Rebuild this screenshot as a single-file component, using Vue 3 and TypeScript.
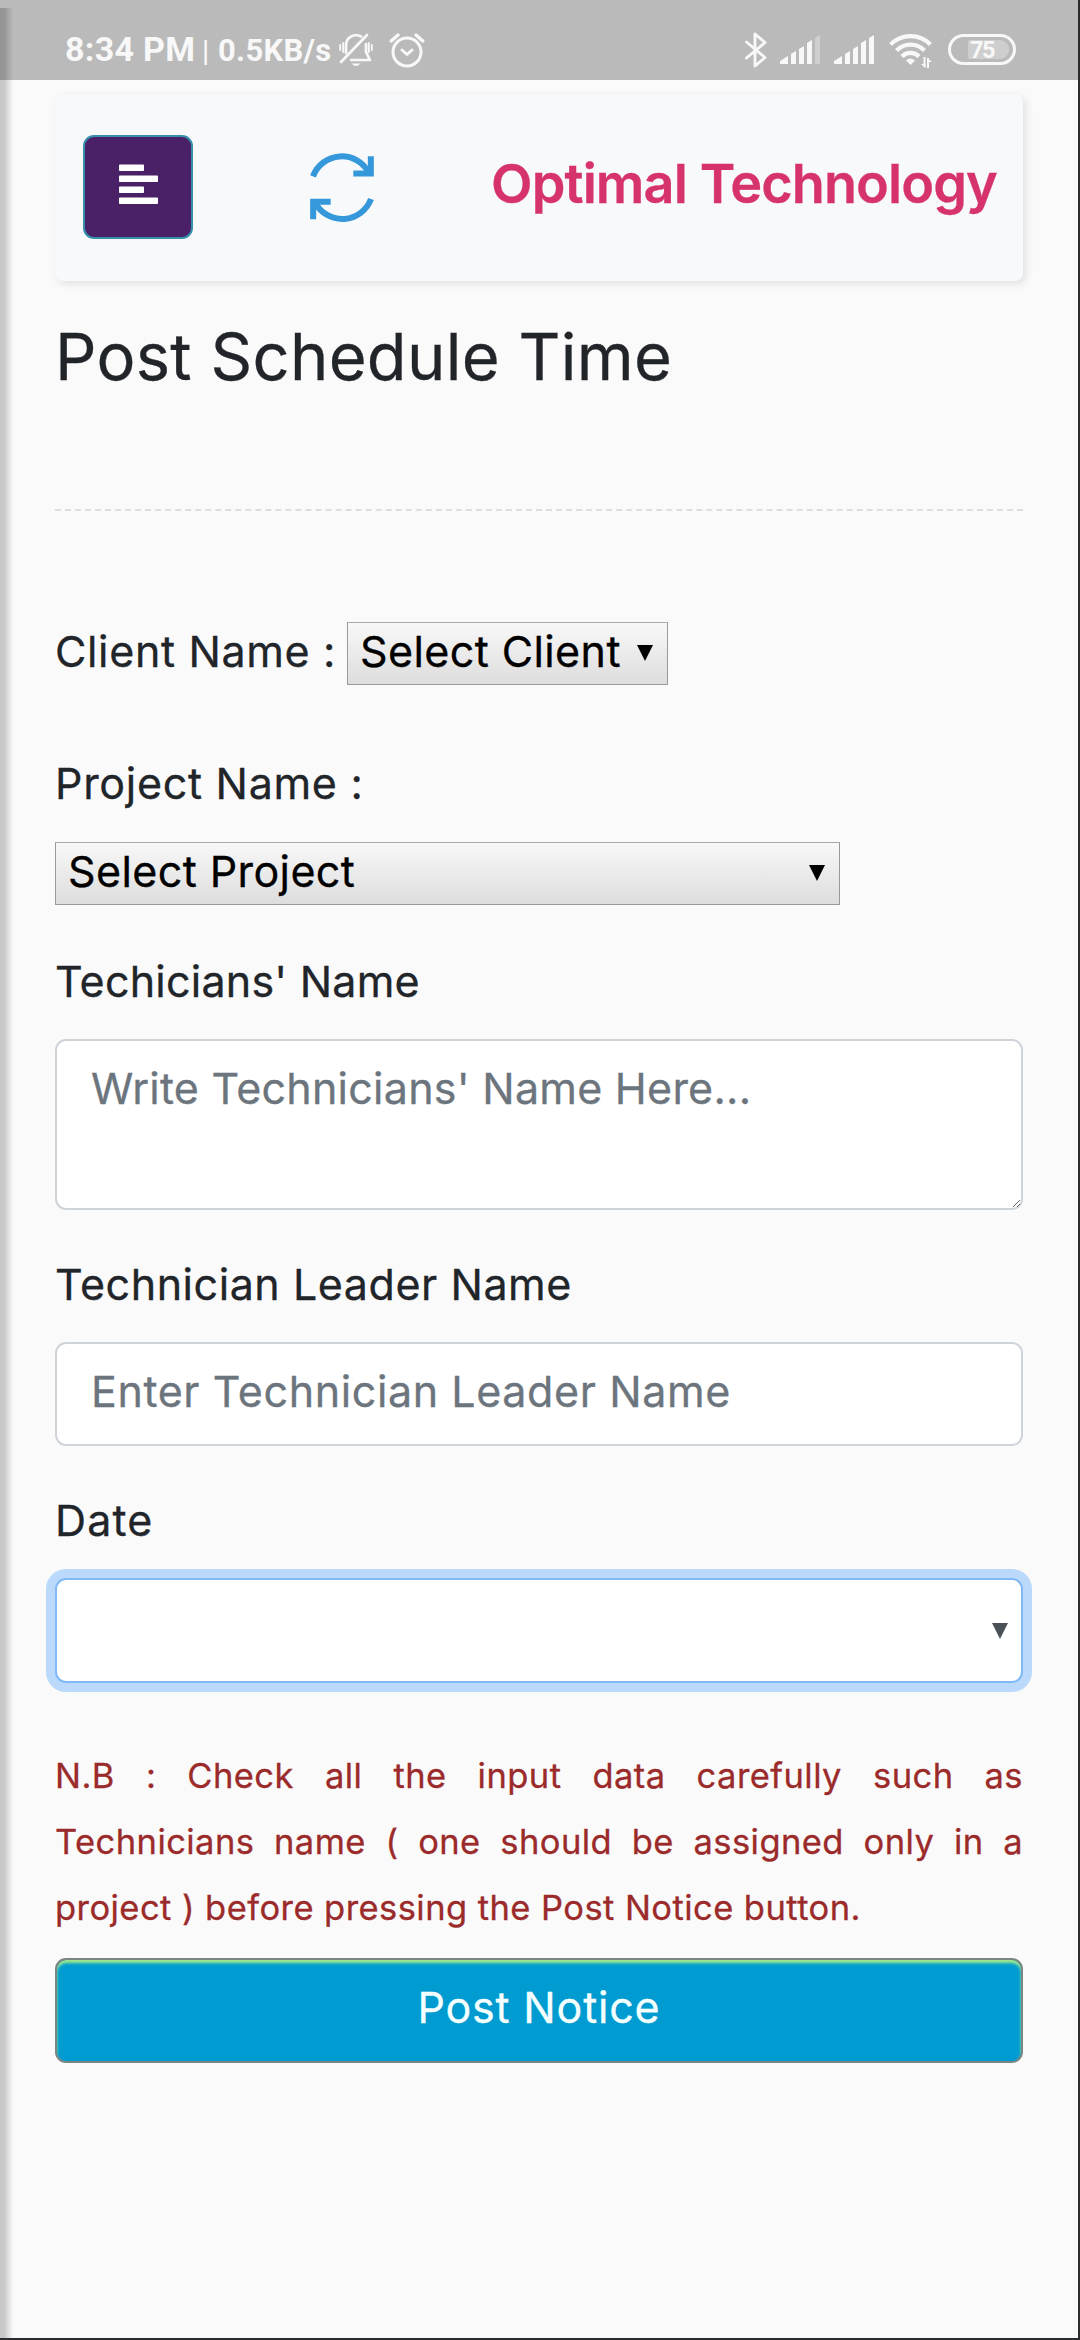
<script setup lang="ts">
import { ref } from 'vue'

const client = ref('')
const project = ref('')
const technicians = ref('')
const leader = ref('')
const date = ref('')
const bars = [8, 13, 18, 24, 29]
</script>

<template>
  <div class="screen">
    <header class="status">
      <div class="status-text">
        <span class="time">8:34 PM</span>
        <span class="sep">|</span>
        <span class="speed">0.5KB/s</span>
      </div>
      <svg class="bell" width="34" height="34" viewBox="0 0 34 34" fill="none" stroke="#f8f8f8" stroke-width="2.7" stroke-linecap="round" stroke-linejoin="round">
        <path d="M7 20V12a10 10 0 0 1 15-8.5" />
        <path d="M27 11v8l4 8H12" />
        <path d="M2 29 28 2" />
        <path d="M1.2 12v5M4.2 10v9M29.8 10v9M32.8 12v5" stroke-width="1.9" />
        <path d="M12.500 30.500h9q-4.500 5-9 0z" fill="#f8f8f8" stroke="none" />
      </svg>
      <svg class="alarm" width="36" height="36" viewBox="0 0 36 36" fill="none" stroke="#f8f8f8" stroke-linecap="round" stroke-linejoin="round">
        <circle cx="18" cy="20" r="14" stroke-width="3" />
        <path d="M13 18l5 4.500 5-4.500" stroke-width="3" />
        <path d="M2.200 9 9 3M27 3l6.800 6" stroke-width="3.400" />
      </svg>
      <div class="spacer"></div>
      <svg class="bt" width="22" height="36" viewBox="0 0 22 36" fill="none" stroke="#f8f8f8" stroke-width="2.900" stroke-linecap="round" stroke-linejoin="round">
        <path d="M1.500 10 20 25.500 10 34V2l10 8.500L1.500 26" />
      </svg>
      <svg v-for="n in 2" :key="n" class="signal" width="41" height="30" viewBox="0 0 41 30">
        <path
          v-for="(h, i) in bars"
          :key="i"
          :d="`M${i === 0 ? 0 : i * 8 + 3} 30V${i === 0 ? 27 : 33 - h}L${i * 8 + 8} ${30 - h}V30z`"
          fill="#f8f8f8"
          :opacity="n === 1 && i === 4 ? 0.35 : 1"
        />
      </svg>
      <svg class="wifi" width="44" height="36" viewBox="0 0 44 36" fill="none" stroke="#f8f8f8" stroke-width="4.200">
        <path d="M1.600 12.500a28 28 0 0 1 39.800 0" />
        <path d="M7.500 18.500a19.500 19.500 0 0 1 28 0" />
        <path d="M13 24.500a12 12 0 0 1 17 0" />
        <path d="M17 28.500q4.500-4 9 0l-4.500 4.500z" fill="#f8f8f8" stroke="none" />
        <path d="M35.500 35V25M39 26v10" stroke-width="2" />
        <path d="M32 32h4.500v4zM38 25.500l5 4.500h-5z" fill="#f8f8f8" stroke="none" />
      </svg>
      <div class="battery"><span class="charge">75</span></div>
    </header>

    <main class="page">
      <nav class="navbar">
        <button class="menu" type="button" aria-label="Menu">
          <svg width="39" height="41" viewBox="0 0 39 41" fill="#fff">
            <rect y="0.500" width="25" height="6.500" rx="0.800" />
            <rect y="11.500" width="39" height="6.500" rx="0.800" />
            <rect y="22.500" width="25" height="6.500" rx="0.800" />
            <rect y="33.500" width="39" height="6.500" rx="0.800" />
          </svg>
        </button>
        <svg class="refresh" width="64" height="70" viewBox="60 68 192 210" fill="none" stroke="#3498db" stroke-width="18">
          <path d="M69 138A92 92 0 0 1 236 126" />
          <path d="M190 129.500H242.500V78" />
          <path d="M243 206A92 92 0 0 1 76 218" />
          <path d="M122 214.500H69.500V267" />
        </svg>
        <span class="brand">Optimal Technology</span>
      </nav>

      <h2 class="heading">Post Schedule Time</h2>
      <div class="rule"></div>

      <form class="form" @submit.prevent>
        <div class="client-row">
          <label class="client-label">Client Name :</label>
          <div class="picker client-picker">
            <select v-model="client"><option value="">Select Client</option></select>
            <svg class="caret" width="16" height="16" viewBox="0 0 16 16"><path d="M0 0h16L8 16z" /></svg>
          </div>
        </div>

        <label class="label project-label">Project Name :</label>
        <div class="picker project-picker">
          <select v-model="project"><option value="">Select Project</option></select>
          <svg class="caret" width="16" height="16" viewBox="0 0 16 16"><path d="M0 0h16L8 16z" /></svg>
        </div>

        <label class="label tech-label">Techicians' Name</label>
        <textarea v-model="technicians" class="control area" placeholder="Write Technicians' Name Here..."></textarea>

        <label class="label leader-label">Technician Leader Name</label>
        <input v-model="leader" class="control line" type="text" placeholder="Enter Technician Leader Name" />

        <label class="label date-label">Date</label>
        <div class="date-field">
          <input v-model="date" class="date-input" type="text" aria-label="Date" />
          <svg width="16" height="16" viewBox="0 0 16 16" fill="#495057"><path d="M0 0h16L8 16z" /></svg>
        </div>

        <p class="note">N.B : Check all the input data carefully such as Technicians name ( one should be assigned only in a project ) before pressing the Post Notice button.</p>
        <button class="submit" type="submit">Post Notice</button>
      </form>
    </main>
    <div class="edge-shadow"></div>
  </div>
</template>

<style>
body {
  margin: 0;
  background: #fafafa;
}
</style>

<style scoped>
* {
  box-sizing: border-box;
}
.screen {
  position: relative;
  width: 1080px;
  height: 2340px;
  overflow: hidden;
  background: #fafafa;
  border-right: 2px solid #2a2c2e;
  border-bottom: 2px solid #2a2c2e;
  font-family: Inter, 'Open Sans', sans-serif;
  font-size: 43px;
  color: #212529;
}
svg {
  display: block;
  flex: none;
}

/* Status bar */
.status {
  display: flex;
  align-items: center;
  height: 80px;
  padding: 20px 62px 0 65px;
  background: #bababa;
  color: #f8f8f8;
  font-family: Roboto, sans-serif;
  font-weight: 700;
}
.status-text {
  display: flex;
  align-items: baseline;
  line-height: 61px;
  white-space: nowrap;
}
.time {
  width: 137px;
  font-size: 34px;
  letter-spacing: 0.3px;
}
.sep {
  width: 16px;
  font-size: 29px;
  font-weight: 500;
}
.speed {
  width: 121px;
  font-size: 31px;
  letter-spacing: 0.3px;
}
.alarm {
  margin-left: 16px;
}
.spacer {
  flex: 1;
}
.bt {
  margin-right: 13px;
}
.signal {
  margin: -3px 13px 0 0;
}
.wifi {
  margin: 0 15px 0 1px;
}
.battery {
  display: flex;
  align-items: center;
  width: 68px;
  height: 31px;
  margin-top: -2px;
  padding: 0 4px 0 17px;
  border: 3px solid #f8f8f8;
  border-radius: 16px;
}
.charge {
  flex: 1;
  height: 19px;
  padding-left: 2px;
  border-radius: 2px 9px 9px 2px;
  background: #cecece;
  font-size: 23.5px;
  line-height: 20px;
  letter-spacing: -1.5px;
}

/* Page */
.page {
  width: 968px;
  margin-left: 55px;
  -webkit-text-stroke: 0.3px currentColor;
}
.navbar {
  display: flex;
  align-items: center;
  height: 187px;
  margin-top: 14px;
  padding: 0 26px 0 28px;
  border-radius: 8px;
  background: #f8f9fb;
  box-shadow: 3px 3px 8px rgba(0, 0, 0, 0.1);
}
.menu {
  display: flex;
  align-items: center;
  justify-content: center;
  width: 110px;
  height: 104px;
  margin-top: -1px;
  padding: 0 0 6px;
  border: 2px solid #368fac;
  border-radius: 11px;
  background: #4a2167;
}
.refresh {
  margin-left: 117px;
}
.brand {
  margin: -8px 0 0 auto;
  color: #d6336c;
  font-size: 54px;
  font-weight: 600;
  line-height: 66px;
  letter-spacing: -0.9px;
  white-space: nowrap;
}
.heading {
  margin: 36px 0 112px;
  font-size: 65px;
  font-weight: 400;
  line-height: 80px;
  letter-spacing: 0.3px;
}
.rule {
  border-top: 2px dashed #dedede;
}

/* Form */
.form {
  display: flex;
  flex-direction: column;
  align-items: stretch;
  margin-top: 111px;
}
.client-row {
  display: flex;
  align-items: flex-start;
}
.client-label {
  width: 292px;
  line-height: 58px;
  letter-spacing: 0.65px;
  white-space: nowrap;
}
.label {
  line-height: 66px;
}
.picker {
  position: relative;
  height: 63px;
  border: 1px solid #999;
  border-top-color: #a9a9a9;
  background: linear-gradient(#f8f8f8, #ddd);
}
.picker select {
  display: block;
  width: 100%;
  height: 56px;
  padding: 0 40px 0 12px;
  border: 0;
  outline: 0;
  appearance: none;
  background: transparent;
  color: #000;
  font: inherit;
  letter-spacing: 0.4px;
}
.caret {
  position: absolute;
  top: 22px;
  right: 14px;
}
.client-picker {
  width: 321px;
}
.project-picker {
  width: 785px;
}
.project-label {
  margin: 65px 0 26px;
  letter-spacing: 0.7px;
}
.tech-label {
  margin: 43px 0 25px;
  letter-spacing: 0.22px;
}
.leader-label {
  margin: 41px 0 25px;
  letter-spacing: 0.55px;
}
.date-label {
  margin: 41px 0 25px;
  letter-spacing: 1.1px;
}
.control {
  display: block;
  width: 100%;
  border: 2px solid #ced4da;
  border-radius: 11px;
  outline: 0;
  background: #fff;
  color: #495057;
  font: inherit;
  line-height: 66px;
}
.control::placeholder {
  color: #6c757d;
  opacity: 1;
}
.area {
  height: 171px;
  padding: 14px 34px;
  letter-spacing: 0.25px;
}
.line {
  height: 104px;
  padding: 0 34px 7px;
  letter-spacing: 0.6px;
}
.date-field {
  display: flex;
  align-items: center;
  height: 105px;
  padding: 0 13px 0 33px;
  border: 2px solid #80b9f5;
  border-radius: 11px;
  background: #fff;
  box-shadow: 0 0 0 9px #bbdafb;
}
.date-input {
  flex: 1;
  min-width: 0;
  padding: 0;
  border: 0;
  outline: 0;
  background: transparent;
  font: inherit;
}
.note {
  margin: 60px 0 17px;
  color: #9b2a2a;
  font-size: 34.5px;
  line-height: 66px;
  letter-spacing: 0.44px;
  text-align: justify;
}
.submit {
  height: 105px;
  padding: 0 0 7px;
  border: 2px solid #7a8585;
  border-radius: 11px;
  background: #009bd0;
  box-shadow: inset 0 3px 3px #a0eb8c;
  color: #f4ffff;
  font: inherit;
  letter-spacing: 0.8px;
}

/* Shadow cast by the drawer along the left edge */
.edge-shadow {
  position: absolute;
  top: 8px;
  bottom: 0;
  left: 0;
  width: 14px;
  background: linear-gradient(90deg, rgba(0, 0, 0, 0.2) 30%, rgba(0, 0, 0, 0.03) 85%, transparent);
}
</style>
